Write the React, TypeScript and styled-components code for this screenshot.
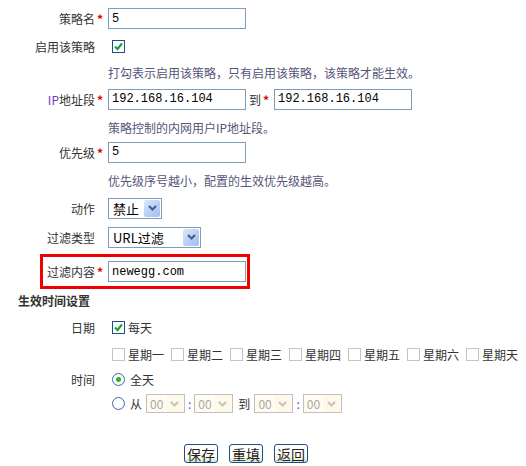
import { FunctionComponent } from 'react';
import styled, { createGlobalStyle } from 'styled-components';

const GlobalStyle = createGlobalStyle`
  body {
    margin: 0;
    background: #fff;
    color: #333;
    font-family: "Noto Sans CJK SC", "Liberation Sans", sans-serif;
    font-size: 12px;
  }
`;

const Form = styled.div`
  padding-top: 5px;
  width: 526px;
`;

const Row = styled.div<{ h: number }>`
  display: flex;
  align-items: center;
  height: ${(p) => p.h}px;
  box-sizing: border-box;
`;

const Label = styled.div`
  width: 95px;
  text-align: right;
  white-space: nowrap;
  color: #333;
`;

const LinkText = styled.span`
  color: #7040b8;
`;

const Star = styled.span`
  width: 13px;
  padding-left: 2px;
  box-sizing: border-box;
  color: #e00000;
  font-weight: bold;
  font-size: 12px;
`;

const Gap = styled.span`
  width: 13px;
`;

const Hint = styled.div`
  padding-left: 108px;
  color: #56567a;
`;

const TextInput = styled.input<{ w?: number }>`
  width: ${(p) => p.w || 138}px;
  height: 21px;
  box-sizing: border-box;
  border: 1px solid #7f9db9;
  padding: 0 3px;
  font-family: "Liberation Mono", monospace;
  font-size: 12px;
  color: #000;
  outline: none;
`;

const Between = styled.span`
  margin-left: 3px;
  color: #333;
`;

const Box = styled.span<{ off?: boolean; inset?: number }>`
  display: inline-flex;
  align-items: center;
  justify-content: center;
  flex: none;
  width: 13px;
  height: 13px;
  box-sizing: border-box;
  border: 1px solid ${(p) => (p.off ? '#c4c4c4' : '#1c5180')};
  background: #fff;
  margin-left: ${(p) => (p.inset === undefined ? 4 : p.inset)}px;
`;

const CheckItem = styled.span`
  display: inline-flex;
  align-items: center;
  width: 59px;
  white-space: nowrap;
`;

const DayText = styled.span`
  margin-left: 3px;
`;

const Weekdays = styled.div`
  display: flex;
  padding-left: 112px;
`;

const SelectBox = styled.div<{ w: number; off?: boolean }>`
  display: flex;
  align-items: center;
  width: ${(p) => p.w}px;
  height: ${(p) => (p.off ? 19 : 21)}px;
  box-sizing: border-box;
  border: 1px solid ${(p) => (p.off ? '#c0c0c0' : '#7f9db9')};
  background: ${(p) => (p.off ? '#fffbf0' : '#fff')};
  padding-left: ${(p) => (p.off ? 3 : 4)}px;
  font-size: ${(p) => (p.off ? 12 : 13)}px;
  color: ${(p) => (p.off ? '#a8a8a8' : '#000')};
  white-space: nowrap;
`;

const SelectText = styled.span`
  flex: 1;
  line-height: 1;
`;

const ArrowBtn = styled.span<{ off?: boolean }>`
  display: flex;
  align-items: center;
  justify-content: center;
  width: ${(p) => (p.off ? 17 : 16)}px;
  height: 17px;
  margin-right: 1px;
  border-radius: ${(p) => (p.off ? 0 : 2)}px;
  background: ${(p) =>
    p.off ? '#fff8e8' : 'linear-gradient(135deg, #d9e7fc 0%, #b4cdf5 60%, #a3c0f0 100%)'};
  border-left: ${(p) => (p.off ? '1px solid #fff' : 'none')};
`;

const HighlightBox = styled.div`
  display: flex;
  align-items: center;
  margin-left: 40px;
  width: 210px;
  height: 35px;
  box-sizing: border-box;
  border: 3px solid #f00000;
  padding-left: 4px;
`;

const Heading = styled.div`
  padding-left: 18px;
  font-weight: bold;
  color: #333;
`;

const RadioDot = styled.span<{ on?: boolean }>`
  display: inline-flex;
  align-items: center;
  justify-content: center;
  width: 13px;
  height: 13px;
  box-sizing: border-box;
  margin-left: 4px;
  margin-right: 5px;
  border-radius: 50%;
  border: 1px solid #3b6ea8;
  background: radial-gradient(circle at 40% 40%, #fff 40%, #eef0e8 100%);
  &::after {
    content: '';
    display: ${(p) => (p.on ? 'block' : 'none')};
    width: 5px;
    height: 5px;
    border-radius: 50%;
    background: #2fae2f;
  }
`;

const Colon = styled.span`
  margin: 0 3px;
  color: #7040b8;
`;

const Inline = styled.span`
  margin-right: 4px;
`;

const ToWord = styled.span`
  margin: 0 4px 0 5px;
`;

const Buttons = styled.div`
  display: flex;
  gap: 11px;
  padding-left: 184px;
  margin-top: 30px;
`;

const Button = styled.button`
  height: 19px;
  padding: 0 2px;
  box-sizing: border-box;
  border: 1px solid #1c4f8a;
  border-radius: 3px;
  background: linear-gradient(#ffffff 0%, #fffdf3 65%, #d9e6cf 100%);
  font-family: "Noto Sans CJK SC", sans-serif;
  font-size: 14px;
  line-height: 16px;
  color: #222;
`;

const Chevron: FunctionComponent<{ color: string }> = ({ color }) => (
  <svg width="11" height="8" viewBox="0 0 11 8">
    <polyline points="2,2 5.5,5.5 9,2" fill="none" stroke={color} strokeWidth="2.2" />
  </svg>
);

const Tick = () => (
  <svg width="11" height="11" viewBox="0 0 11 11">
    <polyline points="2,5.5 4.5,8 9,2.5" fill="none" stroke="#21a03a" strokeWidth="2.2" />
  </svg>
);

const Select: FunctionComponent<{ w: number; text: string; off?: boolean }> = ({ w, text, off }) => (
  <SelectBox w={w} off={off}>
    <SelectText>{text}</SelectText>
    <ArrowBtn off={off}>
      <Chevron color={off ? '#c4c4c4' : '#4a5f82'} />
    </ArrowBtn>
  </SelectBox>
);

const weekdays = ['星期一', '星期二', '星期三', '星期四', '星期五', '星期六', '星期天'];

const App: FunctionComponent = () => {
  return (
    <>
      <GlobalStyle />
      <Form>
        <Row h={27}>
          <Label>策略名</Label>
          <Star>*</Star>
          <TextInput value="5" readOnly />
        </Row>
        <Row h={28}>
          <Label>启用该策略</Label>
          <Gap />
          <Box>
            <Tick />
          </Box>
        </Row>
        <Row h={24}>
          <Hint>打勾表示启用该策略，只有启用该策略，该策略才能生效。</Hint>
        </Row>
        <Row h={30}>
          <Label>
            <LinkText>IP</LinkText>地址段
          </Label>
          <Star>*</Star>
          <TextInput value="192.168.16.104" readOnly />
          <Between>到</Between>
          <Star>*</Star>
          <TextInput value="192.168.16.104" readOnly />
        </Row>
        <Row h={26}>
          <Hint>策略控制的内网用户IP地址段。</Hint>
        </Row>
        <Row h={24}>
          <Label>优先级</Label>
          <Star>*</Star>
          <TextInput value="5" readOnly />
        </Row>
        <Row h={32}>
          <Hint>优先级序号越小，配置的生效优先级越高。</Hint>
        </Row>
        <Row h={24}>
          <Label>动作</Label>
          <Gap />
          <Select w={54} text="禁止" />
        </Row>
        <Row h={34}>
          <Label>过滤类型</Label>
          <Gap />
          <Select w={93} text="URL过滤" />
        </Row>
        <Row h={35}>
          <HighlightBox>
            <span>过滤内容</span>
            <Star>*</Star>
            <TextInput value="newegg.com" readOnly />
          </HighlightBox>
        </Row>
        <Row h={22}>
          <Heading>生效时间设置</Heading>
        </Row>
        <Row h={32}>
          <Label>日期</Label>
          <Gap />
          <Box>
            <Tick />
          </Box>
          <DayText>每天</DayText>
        </Row>
        <Row h={22}>
          <Weekdays>
            {weekdays.map((d) => (
              <CheckItem key={d}>
                <Box off inset={0} />
                <DayText>{d}</DayText>
              </CheckItem>
            ))}
          </Weekdays>
        </Row>
        <Row h={28}>
          <Label>时间</Label>
          <Gap />
          <RadioDot on />
          <span>全天</span>
        </Row>
        <Row h={21}>
          <Label />
          <Gap />
          <RadioDot />
          <Inline>从</Inline>
          <Select w={39} text="00" off />
          <Colon>:</Colon>
          <Select w={39} text="00" off />
          <ToWord>到</ToWord>
          <Select w={39} text="00" off />
          <Colon>:</Colon>
          <Select w={39} text="00" off />
        </Row>
        <Buttons>
          <Button>保存</Button>
          <Button>重填</Button>
          <Button>返回</Button>
        </Buttons>
      </Form>
    </>
  );
};

export default App;
